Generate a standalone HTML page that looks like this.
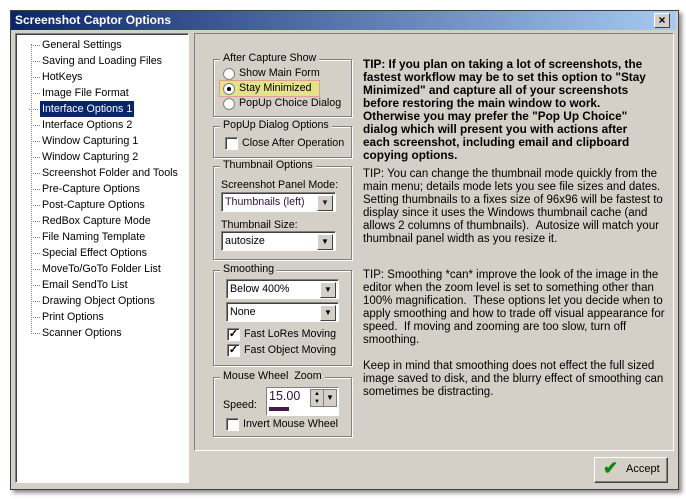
<!DOCTYPE html><html><head><style>
body{margin:0;width:686px;height:499px;background:#fff;font-family:"Liberation Sans",sans-serif;font-size:10.7px;position:relative;overflow:hidden}
.a{position:absolute}
.win{left:10px;top:10px;width:667px;height:478px;background:#d4d0c8;border:1px solid #404040;box-shadow:3px 3px 4px rgba(0,0,0,.45)}
.title{left:11px;top:11px;width:665px;height:19px;background:linear-gradient(90deg,#0a246a,#a6caf0);color:#fff;font-weight:bold;font-size:12px;line-height:19px;text-indent:4px}
.x{left:654px;top:13px;width:14px;height:13px;background:#d4d0c8;border:1px solid;border-color:#fff #404040 #404040 #fff;font-size:12px;line-height:12px;text-align:center;font-weight:bold}
.tree{left:15px;top:33px;width:172px;height:448px;background:#fff;border:1px solid;border-color:#808080 #fff #fff #808080;box-shadow:inset 1px 1px 0 #404040}
.tree div{position:absolute;left:26px;height:16px;line-height:16px;white-space:nowrap;color:#000}
.tree div:before{content:"";position:absolute;left:-11px;top:8px;width:9px;border-top:1px dotted #808080}
.vl{position:absolute;left:15px;top:10px;height:288px;border-left:1px dotted #808080}
.panel{left:194px;top:33px;width:478px;height:416px;border:1px solid;border-color:#808080 #fff #fff #808080}
.g{position:absolute;border:1px solid #808080;box-shadow:1px 1px 0 #fff,inset 1px 1px 0 #fff}
.g>.l{position:absolute;top:-8px;left:6px;background:#d4d0c8;padding:0 3px;white-space:nowrap}
.t{position:absolute;white-space:nowrap}
.rb{position:absolute;width:10px;height:10px;border-radius:50%;background:#fff;border:1px solid #808080}
.cb{position:absolute;width:11px;height:11px;background:#fff;border:1px solid;border-color:#808080 #fff #fff #808080;box-shadow:inset 1px 1px 0 #404040;font-size:11px;line-height:11px;text-align:center;font-weight:bold}
.cmb{position:absolute;height:18px;background:#fff;border:1px solid;border-color:#808080 #fff #fff #808080;box-shadow:inset 1px 1px 0 #404040;line-height:18px;text-indent:3px;white-space:nowrap}
.cmb:after{content:"▼";position:absolute;right:2px;top:2px;width:14px;height:14px;background:#d4d0c8;border:1px solid;border-color:#fff #404040 #404040 #fff;font-size:8px;line-height:14px;text-align:center;text-indent:0}
.tip{position:absolute;left:363px;white-space:nowrap;font-size:11.5px;line-height:13px;color:#000}
</style></head><body>
<div class="a win"></div>
<div class="a title">Screenshot Captor Options</div>
<div class="a x">×</div>
<div class="a tree"><span class="vl"></span>
<div style="top:3px">General Settings</div>
<div style="top:19px">Saving and Loading Files</div>
<div style="top:35px">HotKeys</div>
<div style="top:51px">Image File Format</div>
<div style="top:67px;background:#0a246a;color:#fff;padding:0 2px;left:24px">Interface Options 1</div>
<div style="top:83px">Interface Options 2</div>
<div style="top:99px">Window Capturing 1</div>
<div style="top:115px">Window Capturing 2</div>
<div style="top:131px">Screenshot Folder and Tools</div>
<div style="top:147px">Pre-Capture Options</div>
<div style="top:163px">Post-Capture Options</div>
<div style="top:179px">RedBox Capture Mode</div>
<div style="top:195px">File Naming Template</div>
<div style="top:211px">Special Effect Options</div>
<div style="top:227px">MoveTo/GoTo Folder List</div>
<div style="top:243px">Email SendTo List</div>
<div style="top:259px">Drawing Object Options</div>
<div style="top:275px">Print Options</div>
<div style="top:291px">Scanner Options</div>
</div>
<div class="a panel"></div>

<div class="g" style="left:213px;top:59px;width:137px;height:56px"><span class="l">After Capture Show</span></div>
<div class="rb" style="left:223px;top:68px"></div><span class="t" style="left:239px;top:67px">Show Main Form</span>
<div class="a" style="left:219px;top:80px;width:99px;height:15px;background:#e5e38a;border:1px solid #e0a090"></div>
<div class="rb" style="left:223px;top:83px"></div><div class="a" style="left:227px;top:87px;width:4px;height:4px;border-radius:50%;background:#000"></div><span class="t" style="left:239px;top:82px">Stay Minimized</span>
<div class="rb" style="left:223px;top:98px"></div><span class="t" style="left:239px;top:97px">PopUp Choice Dialog</span>

<div class="g" style="left:213px;top:126px;width:137px;height:30px"><span class="l">PopUp Dialog Options</span></div>
<div class="cb" style="left:225px;top:137px"></div><span class="t" style="left:242px;top:137px">Close After Operation</span>

<div class="g" style="left:213px;top:166px;width:137px;height:92px"><span class="l">Thumbnail Options</span></div>
<span class="t" style="left:221px;top:179px">Screenshot Panel Mode:</span>
<div class="cmb" style="left:221px;top:192px;width:113px;color:#301040">Thumbnails (left)</div>
<span class="t" style="left:221px;top:219px">Thumbnail Size:</span>
<div class="cmb" style="left:221px;top:231px;width:113px">autosize</div>

<div class="g" style="left:213px;top:270px;width:137px;height:94px"><span class="l">Smoothing</span></div>
<div class="cmb" style="left:226px;top:279px;width:111px">Below 400%</div>
<div class="cmb" style="left:226px;top:302px;width:111px">None</div>
<div class="cb" style="left:227px;top:328px">✓</div><span class="t" style="left:244px;top:328px">Fast LoRes Moving</span>
<div class="cb" style="left:227px;top:344px">✓</div><span class="t" style="left:244px;top:344px">Fast Object Moving</span>

<div class="g" style="left:213px;top:377px;width:137px;height:58px"><span class="l">Mouse Wheel &nbsp;Zoom</span></div>
<span class="t" style="left:223px;top:399px">Speed:</span>
<div class="a" style="left:266px;top:387px;width:71px;height:27px;background:#fff;border:1px solid;border-color:#808080 #fff #fff #808080"></div>
<span class="t" style="left:269px;top:389px;color:#301040;font-size:12.5px">15.00</span>
<div class="a" style="left:269px;top:407px;width:20px;height:4px;background:#4a1848"></div>
<div class="a" style="left:310px;top:389px;width:12px;height:16px;background:#d4d0c8;border:1px solid #808080;font-size:6px;line-height:8px;text-align:center">▲<br>▼</div>
<div class="a" style="left:323px;top:389px;width:12px;height:16px;background:#d4d0c8;border:1px solid #808080;font-size:8px;line-height:16px;text-align:center">▼</div>
<div class="cb" style="left:226px;top:418px"></div><span class="t" style="left:243px;top:418px">Invert Mouse Wheel</span>

<div class="tip" style="top:58px;font-weight:bold;font-size:11.8px">TIP: If you plan on taking a lot of screenshots, the<br>fastest workflow may be to set this option to "Stay<br>Minimized" and capture all of your screenshots<br>before restoring the main window to work.<br>Otherwise you may prefer the "Pop Up Choice"<br>dialog which will present you with actions after<br>each screenshot, including email and clipboard<br>copying options.</div>
<div class="tip" style="top:168px">TIP: You can change the thumbnail mode quickly from the<br>main menu; details mode lets you see file sizes and dates.<br>Setting thumbnails to a fixes size of 96x96 will be fastest to<br>display since it uses the Windows thumbnail cache (and<br>allows 2 columns of thumbnails). &nbsp;Autosize will match your<br>thumbnail panel width as you resize it.</div>
<div class="tip" style="top:269px">TIP: Smoothing *can* improve the look of the image in the<br>editor when the zoom level is set to something other than<br>100% magnification. &nbsp;These options let you decide when to<br>apply smoothing and how to trade off visual appearance for<br>speed. &nbsp;If moving and zooming are too slow, turn off<br>smoothing.<br><br>Keep in mind that smoothing does not effect the full sized<br>image saved to disk, and the blurry effect of smoothing can<br>sometimes be distracting.</div>

<div class="a" style="left:594px;top:457px;width:72px;height:24px;background:#d4d0c8;border:1px solid;border-color:#fff #404040 #404040 #fff;box-shadow:inset -1px -1px 0 #808080"></div>
<span class="t" style="left:603px;top:458px;color:#0a8a0a;font-size:18px;font-weight:bold">✔</span>
<span class="t" style="left:626px;top:463px;font-size:11px">Accept</span>
</body></html>
